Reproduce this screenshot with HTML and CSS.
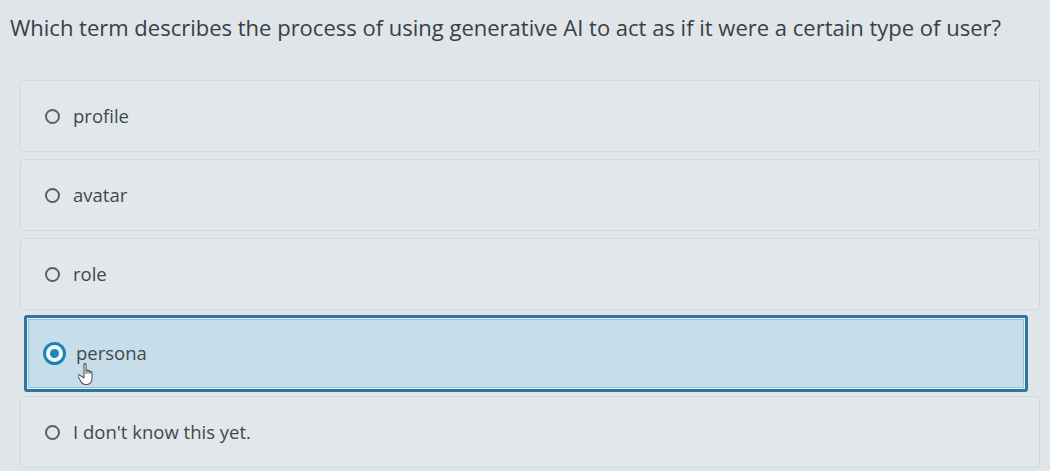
FILE: index.html
```html
<!DOCTYPE html>
<html>
<head>
<meta charset="utf-8">
<link rel="stylesheet" href="styles.css">
</head>
<body>
<div class="page">
  <h1 class="question">Which term describes the process of using generative AI to act as if it were a certain type of user?</h1>
  <div class="options">
    <label class="option"><span class="radio"></span><span class="label">profile</span></label>
    <label class="option"><span class="radio"></span><span class="label">avatar</span></label>
    <label class="option"><span class="radio"></span><span class="label">role</span></label>
    <label class="option selected"><span class="radio"><span class="dot"></span></span><span class="label">persona</span>
      <svg class="cursor" width="22" height="26" viewBox="0 0 22 26">
        <path d="M6 2.5c0-1.2 2-1.2 2 0v9l0-2.5c0-1.2 2-1.2 2 0v2l0-1.5c0-1.2 2-1.2 2 0v2l0-1c0-1.2 2-1.2 2 0v6c0 3-2 6-5 6h-2c-2 0-3-1-4-3l-3-5c-.6-1.2.8-2.2 1.8-1.2L6 16z" fill="#fff" stroke="#555" stroke-width="1.1" stroke-linejoin="round"/>
      </svg>
    </label>
    <label class="option"><span class="radio"></span><span class="label">I don't know this yet.</span></label>
  </div>
</div>
</body>
</html>
```
FILE: styles.css
```css
html, body {
  margin: 0;
  padding: 0;
  background: #dfe5e8;
}
.page {
  width: 1050px;
  height: 471px;
  overflow: hidden;
  font-family: "Open Sans", "Noto Sans", sans-serif;
  color: #3c4348;
  padding: 12px 0 0 10px;
  box-sizing: border-box;
}
.question {
  margin: 0 0 38px 0;
  font-size: 22px;
  font-weight: 400;
  line-height: 30px;
  color: #394045;
}
.options {
  display: flex;
  flex-direction: column;
  gap: 7px;
  padding-left: 10px;
  padding-right: 10px;
}
.option {
  position: relative;
  display: flex;
  align-items: center;
  gap: 13px;
  height: 72px;
  padding-left: 24px;
  box-sizing: border-box;
  background: #e1e7ea;
  border: 1px solid #d2d9dc;
  border-radius: 3px;
  font-size: 18.5px;
  color: #42484c;
}
.option.selected {
  height: 77px;
  margin: -2px 12px -3px 4px;
  background: #c5dee9;
  border: 3px solid #2b77a3;
  box-shadow: inset 0 0 0 1px #e4f0f5, inset 0 0 0 2px #9dbfcd;
  padding-left: 16px;
}
.radio {
  width: 11px;
  height: 11px;
  border: 2.5px solid #5a6064;
  border-radius: 50%;
  flex: none;
  display: flex;
  align-items: center;
  justify-content: center;
}
.selected .radio {
  width: 17px;
  height: 17px;
  border: 3.5px solid #1f84b4;
  background: #f2f8fa;
}
.dot {
  width: 9px;
  height: 9px;
  border-radius: 50%;
  background: #2088b8;
}
.label {
  line-height: 1;
}
.selected .label {
  margin-left: -3px;
}
.cursor {
  position: absolute;
  left: 51px;
  top: 44px;
}
```
